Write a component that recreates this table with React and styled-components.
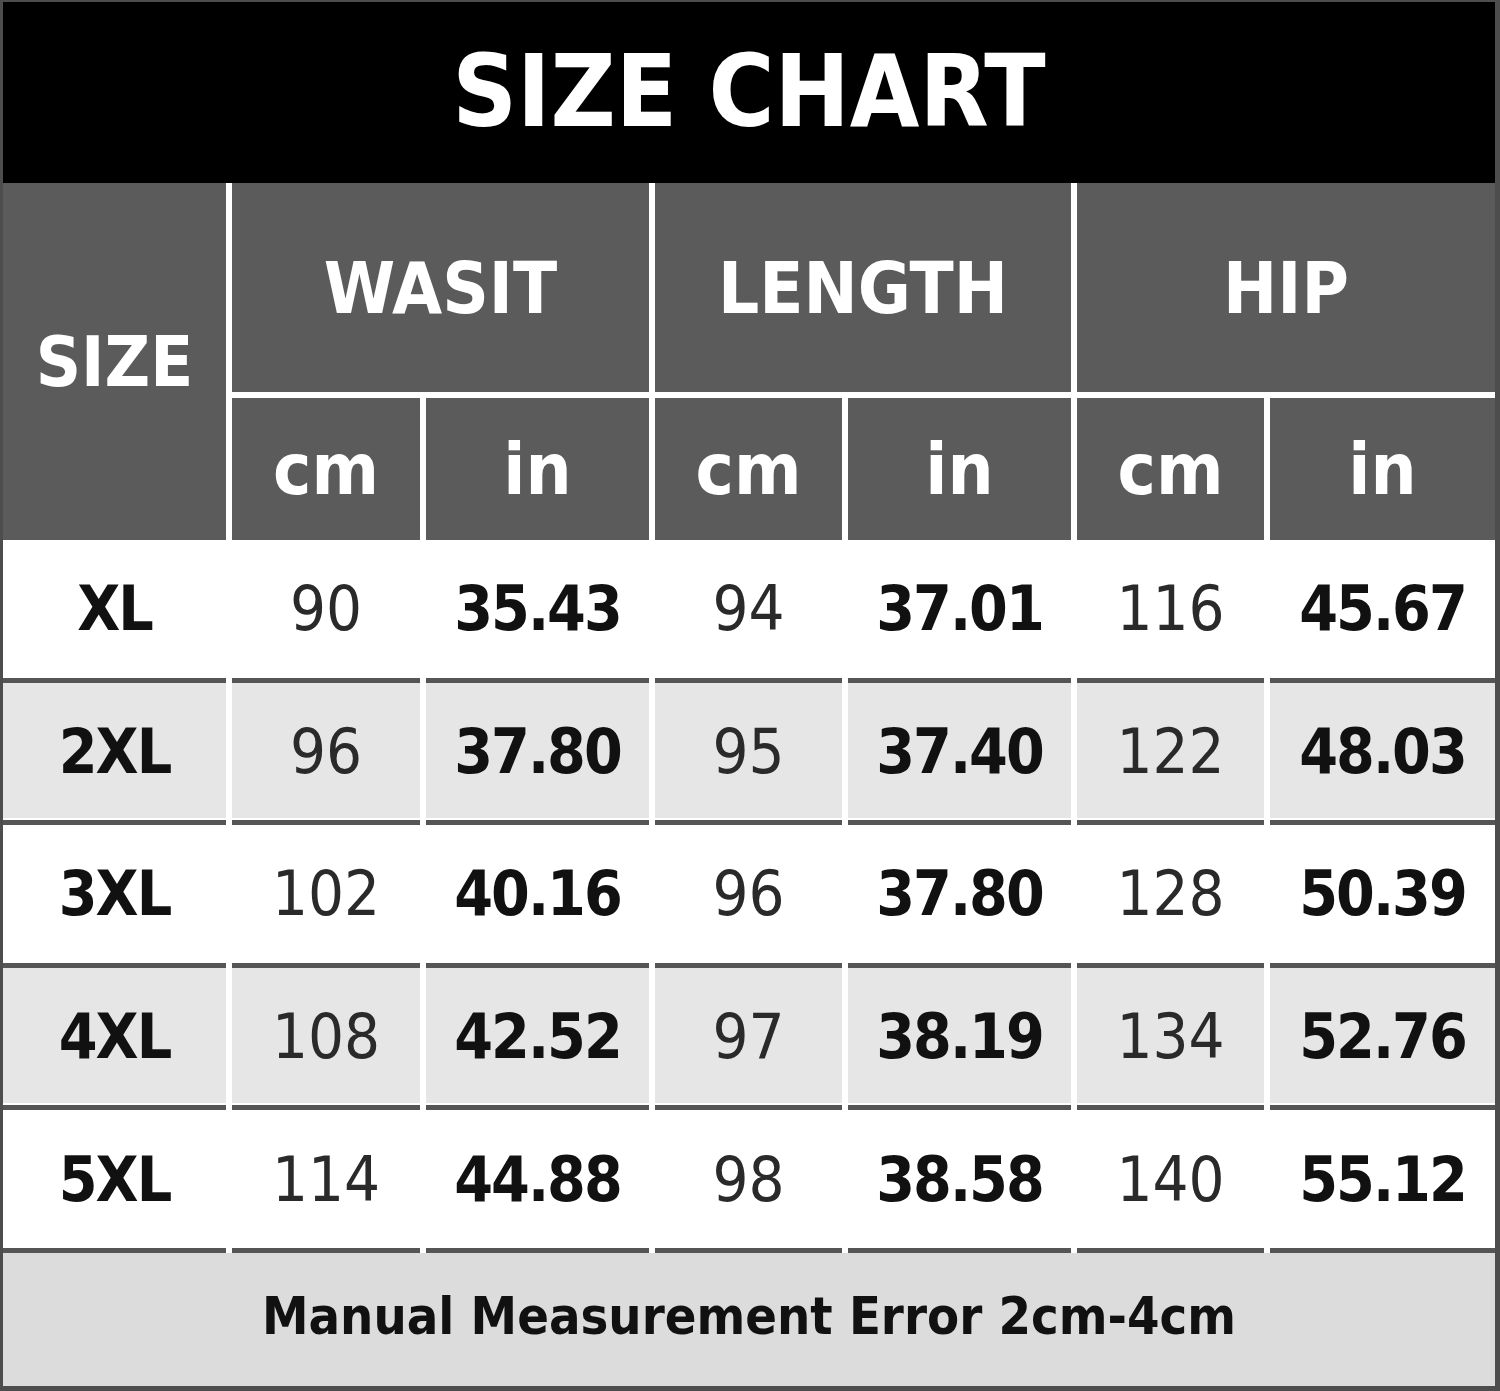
import styled, { createGlobalStyle } from 'styled-components'

const GlobalStyle = createGlobalStyle`
  html, body {
    margin: 0;
    padding: 0;
    background: #fff;
  }
  body {
    font-family: 'DejaVu Sans Condensed', 'DejaVu Sans', Verdana, sans-serif;
    font-stretch: semi-condensed;
  }
`

const columns = '223px 188px 223px 187px 223px 187px 225px'

const Frame = styled.div`
  width: 1500px;
  height: 1391px;
  box-sizing: border-box;
  border: 3px solid #4d4d4d;
  border-top-width: 2px;
  border-right-width: 5px;
  border-bottom-width: 5px;
  background: #fff;
  display: flex;
  flex-direction: column;
  overflow: hidden;
`

const Title = styled.h1`
  margin: 0;
  height: 181px;
  background: #000;
  color: #fff;
  font-size: 100px;
  font-weight: 700;
  display: flex;
  align-items: center;
  justify-content: center;
  padding-bottom: 2px;
  box-sizing: border-box;
`

const Head = styled.div`
  display: grid;
  grid-template-columns: ${columns};
  grid-template-rows: 209px 142px;
  column-gap: 6px;
  row-gap: 6px;
`

const HeadCell = styled.div`
  background: #5b5b5b;
  color: #fff;
  font-weight: 700;
  font-size: ${(p) => p.$size || 72}px;
  display: flex;
  align-items: center;
  justify-content: center;
  grid-column: ${(p) => p.$col || 'auto'};
  grid-row: ${(p) => p.$row || 'auto'};
`

const Body = styled.div`
  display: grid;
  grid-template-columns: ${columns};
  grid-auto-rows: 142.6px;
  column-gap: 6px;
`

const Cell = styled.div`
  background: ${(p) => (p.$shade ? '#e6e6e6' : '#fff')};
  border-bottom: 5px solid #555;
  box-shadow: inset 0 -2px 0 #fff;
  display: flex;
  align-items: center;
  justify-content: center;
  color: ${(p) => (p.$bold ? '#111' : '#2a2a2a')};
  font-weight: ${(p) => (p.$bold ? 700 : 400)};
  font-size: ${(p) => (p.$bold ? 62 : 63)}px;
  letter-spacing: ${(p) => (p.$bold ? '-2px' : '0')};
`

const Footer = styled.div`
  flex: 1;
  background: #dcdcdc;
  display: flex;
  align-items: center;
  justify-content: center;
  color: #111;
  font-weight: 700;
  font-size: 52px;
  padding-bottom: 6px;
  box-sizing: border-box;
`

const rows = [
  ['XL', '90', '35.43', '94', '37.01', '116', '45.67'],
  ['2XL', '96', '37.80', '95', '37.40', '122', '48.03'],
  ['3XL', '102', '40.16', '96', '37.80', '128', '50.39'],
  ['4XL', '108', '42.52', '97', '38.19', '134', '52.76'],
  ['5XL', '114', '44.88', '98', '38.58', '140', '55.12'],
]

const App = () => {
  return (
    <>
      <GlobalStyle />
      <Frame>
        <Title>SIZE CHART</Title>
        <Head>
          <HeadCell $col='1' $row='1 / 3' $size={70}>SIZE</HeadCell>
          <HeadCell $col='2 / 4' $row='1'>WASIT</HeadCell>
          <HeadCell $col='4 / 6' $row='1'>LENGTH</HeadCell>
          <HeadCell $col='6 / 8' $row='1'>HIP</HeadCell>
          {['cm', 'in', 'cm', 'in', 'cm', 'in'].map((unit, i) => (
            <HeadCell key={i} $row='2'>{unit}</HeadCell>
          ))}
        </Head>
        <Body>
          {rows.map((row, r) =>
            row.map((value, c) => (
              <Cell key={`${r}-${c}`} $shade={r % 2 === 1} $bold={c === 0 || c % 2 === 0}>
                {value}
              </Cell>
            ))
          )}
        </Body>
        <Footer>Manual Measurement Error 2cm-4cm</Footer>
      </Frame>
    </>
  )
}

export default App
